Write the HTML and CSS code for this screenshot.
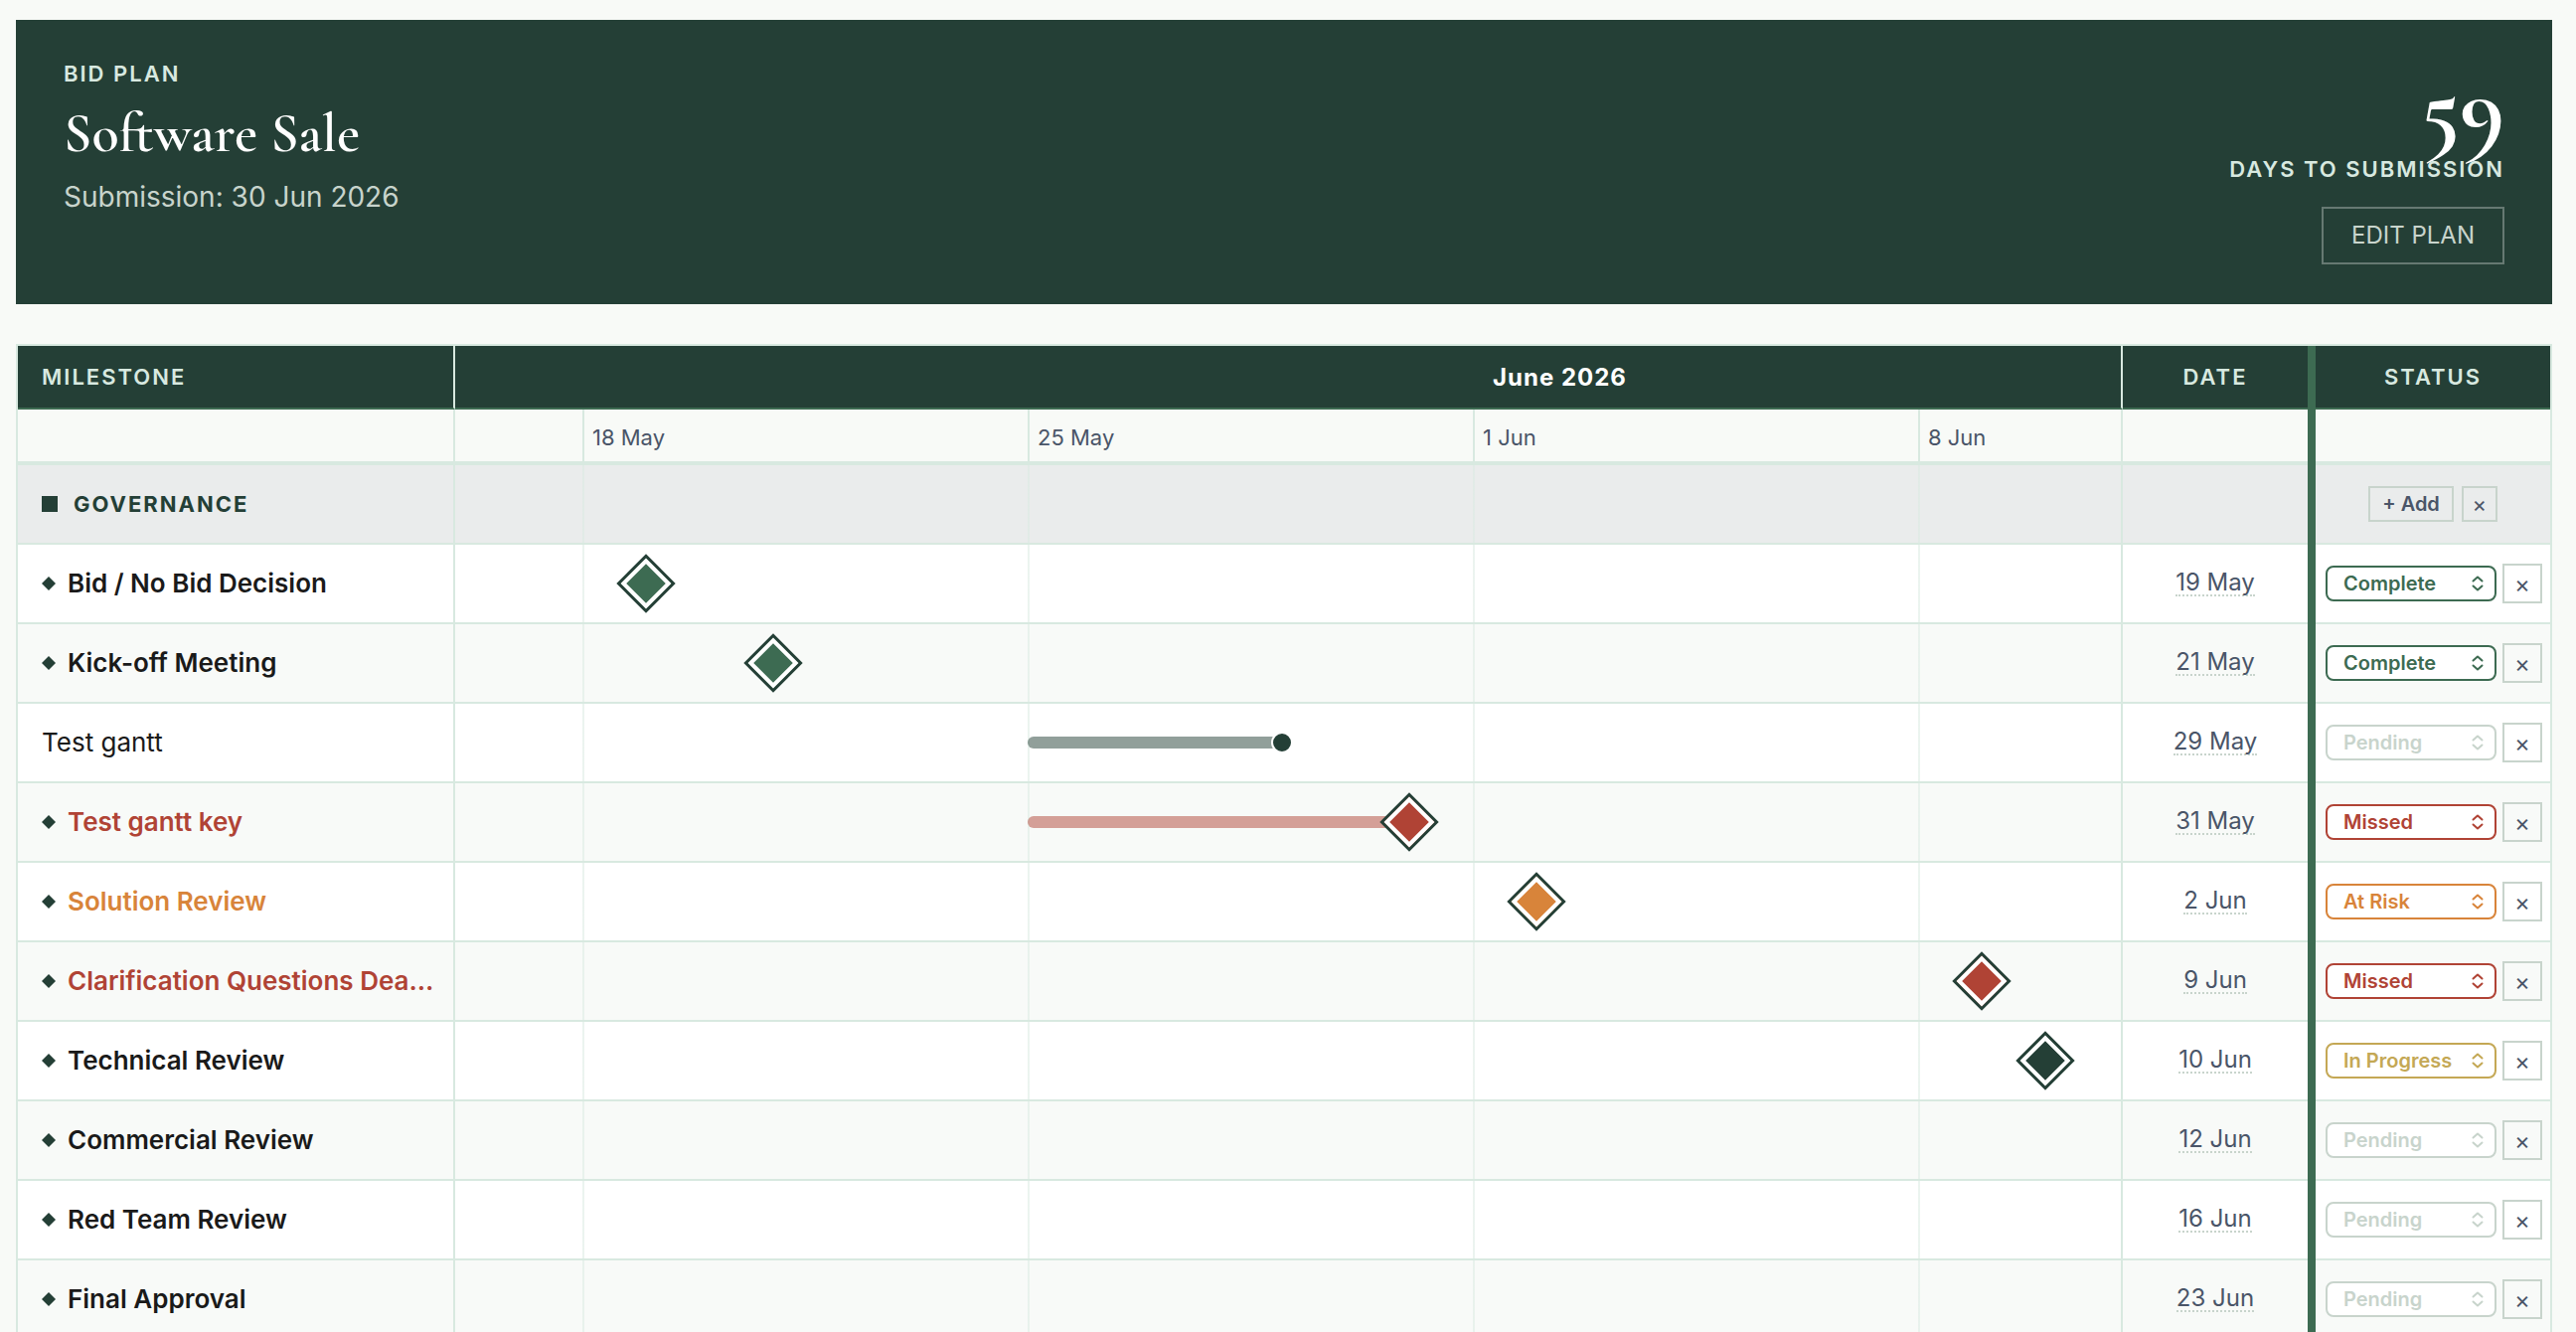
FILE: index.html
```html
<!DOCTYPE html>
<html lang="en">
<head>
    <meta charset="UTF-8">
    <meta name="viewport" content="width=device-width, initial-scale=1.0">
    <title>Bid Plan - Software Sale</title>
    <link rel="stylesheet" href="styles.css">
</head>
<body>
    <!-- shared chevron icon for the status drop-downs -->
    <svg class="sprite" aria-hidden="true">
        <symbol id="updown" viewBox="0 0 12 16">
            <path d="M1.5 5.5 6 1.5l4.5 4M1.5 10.5 6 14.5l4.5-4" fill="none" stroke="currentColor" stroke-width="2" stroke-linecap="round" stroke-linejoin="round"/>
        </symbol>
    </svg>

    <header class="plan-header">
        <div class="plan-info">
            <div class="eyebrow">BID PLAN</div>
            <h1>Software Sale</h1>
            <p>Submission: 30 Jun 2026</p>
        </div>
        <div class="countdown">
            <div class="days">59</div>
            <div class="eyebrow">DAYS TO SUBMISSION</div>
            <button class="edit-btn" type="button">EDIT PLAN</button>
        </div>
    </header>

    <table class="gantt">
        <colgroup>
            <col class="col-name">
            <col>
            <col class="col-date">
            <col class="col-status">
        </colgroup>
        <thead>
            <tr class="head-row">
                <th class="name">MILESTONE</th>
                <th class="timeline"><div class="track"><span class="month" style="--day: 16">June 2026</span></div></th>
                <th class="date">DATE</th>
                <th class="status">STATUS</th>
            </tr>
            <tr class="week-row">
                <td class="name"></td>
                <td class="timeline">
                    <div class="track">
                        <span class="week" style="--day: 2">18 May</span>
                        <span class="week" style="--day: 9">25 May</span>
                        <span class="week" style="--day: 16">1 Jun</span>
                        <span class="week" style="--day: 23">8 Jun</span>
                    </div>
                </td>
                <td class="date"></td>
                <td class="status"></td>
            </tr>
        </thead>
        <tbody id="plan-rows">
            <tr class="section-row">
                <td class="name"><span class="section-name">GOVERNANCE</span></td>
                <td class="timeline"></td>
                <td class="date"></td>
                <td class="status">
                    <div class="section-actions">
                        <button class="add-btn" type="button">+ Add</button>
                        <button class="remove-btn small" type="button" aria-label="Remove section">×</button>
                    </div>
                </td>
            </tr>
        </tbody>
    </table>

    <script src="plan.js"></script>
</body>
</html>
```
FILE: styles.css
```css
:root {
    --dark: #243f36;
    --green: #3d6b52;
    --mint: #d8e9e0;
    --line: #c8d4cc;
    --page: #f8faf7;
    --slate: #4a5568;
    --red: #b04335;
    --orange: #d8843a;
    --gold: #c4a855;
    --day-width: 64px;
}

* {
    box-sizing: border-box;
}

body {
    font-family: Inter, "Liberation Sans", sans-serif;
    margin: 0;
    padding: 20px 24px 0 16px;
    background-color: var(--page);
    color: #1a1a1a;
}

button,
select {
    font-family: inherit;
    cursor: pointer;
}

.sprite {
    display: none;
}

/* Header */
.plan-header {
    display: flex;
    justify-content: space-between;
    background-color: var(--dark);
    color: white;
    padding: 40px 48px;
    margin-bottom: 40px;
}

.eyebrow {
    font-size: 22px;
    font-weight: 600;
    line-height: 28px;
    letter-spacing: 2px;
    color: var(--mint);
}

.plan-info h1 {
    font-family: "Cormorant Garamond", "Liberation Serif", serif;
    font-size: 56px;
    font-weight: 600;
    line-height: 64px;
    margin: 14px 0 16px;
}

.plan-info p {
    font-size: 28px;
    line-height: 32px;
    color: #c8d4cc;
    margin: 0;
}

.countdown {
    display: flex;
    flex-direction: column;
    align-items: flex-end;
}

.days {
    font-family: "Cormorant Garamond", "Liberation Serif", serif;
    font-size: 96px;
    font-weight: 700;
    line-height: 96px;
}

.edit-btn {
    font-size: 24px;
    line-height: 30px;
    padding: 12px 28px;
    margin-top: 24px;
    background: none;
    border: 2px solid rgba(255, 255, 255, 0.3);
    color: #c8d4cc;
}

/* Gantt table */
.gantt {
    width: 100%;
    table-layout: fixed;
    border-collapse: separate;
    border-spacing: 0;
    border: 2px solid var(--mint);
    background-color: white;
}

.col-name {
    width: 440px;
}

.col-date {
    width: 186px;
}

.col-status {
    width: 244px;
}

.gantt th,
.gantt td {
    height: 80px;
    padding: 0;
    border-bottom: 2px solid var(--mint);
}

.gantt .name {
    padding: 0 16px 0 24px;
    border-right: 2px solid var(--mint);
    text-align: left;
}

.gantt .timeline {
    border-right: 2px solid var(--mint);
}

.gantt .date {
    text-align: center;
}

.gantt .status {
    position: relative;
    padding-left: 8px;
}

/* Divider runs over the row borders so it stays unbroken */
.gantt .status::before {
    content: "";
    position: absolute;
    top: -2px;
    bottom: -2px;
    left: 0;
    width: 8px;
    background-color: var(--green);
}

.gantt .head-row .status::before {
    top: 0;
}

.gantt .head-row th {
    height: 64px;
    background-color: var(--dark);
    border-bottom-color: var(--green);
    color: var(--mint);
    font-size: 22px;
    font-weight: 600;
    letter-spacing: 2px;
}

.gantt .week-row td {
    height: 54px;
    background-color: var(--page);
}

.gantt .section-row td {
    height: 82px;
    background-color: #eaecec;
    border-top: 2px solid var(--mint);
}

.task-row:nth-child(odd) {
    background-color: #f8faf8;
}

/* One faint line for each Monday */
tbody .timeline {
    background-image: linear-gradient(to right, rgba(216, 233, 224, 0.5) 2px, transparent 2px);
    background-size: calc(var(--day-width) * 7) 100%;
    background-position: calc(var(--day-width) * 2) 0;
}

.track {
    position: relative;
    height: 100%;
    overflow: hidden;
}

.track > * {
    position: absolute;
    left: calc(var(--day) * var(--day-width));
}

.month {
    padding-left: 20px;
    color: white;
    font-size: 24px;
    font-weight: 700;
    line-height: 64px;
    letter-spacing: 1px;
}

.week {
    padding-left: 8px;
    border-left: 2px solid var(--mint);
    color: var(--slate);
    font-size: 22px;
    line-height: 56px;
}

.section-name {
    display: flex;
    align-items: center;
    gap: 16px;
    color: var(--dark);
    font-size: 22px;
    font-weight: 700;
    letter-spacing: 2px;
}

.section-name::before {
    content: "";
    width: 16px;
    height: 16px;
    background-color: var(--dark);
}

.task-name {
    display: flex;
    align-items: center;
    gap: 12px;
    font-size: 26px;
    line-height: 32px;
}

.task-name svg {
    flex: none;
    width: 14px;
    height: 14px;
    fill: var(--dark);
}

.task-name span {
    overflow: hidden;
    text-overflow: ellipsis;
    white-space: nowrap;
}

.key .task-name {
    font-weight: 600;
}

.missed .task-name {
    color: var(--red);
}

.at-risk .task-name {
    color: var(--orange);
}

/* Bars and markers */
.bar {
    top: 50%;
    width: calc(var(--days) * var(--day-width));
    height: 12px;
    margin-top: -6px;
    border-radius: 6px;
    background-color: var(--marker);
    opacity: 0.5;
}

.dot {
    top: 50%;
    width: 22px;
    height: 22px;
    margin: -11px 0 0 -11px;
    border: 2px solid white;
    border-radius: 50%;
    background-color: var(--marker);
}

.diamond {
    top: 50%;
    width: 36px;
    height: 36px;
    margin: -18px 0 0 -18px;
    border: 4px solid white;
    background-color: var(--marker);
    box-shadow: 0 0 0 3px var(--dark);
    transform: rotate(45deg);
}

.task-row {
    --marker: var(--dark);
    --status: var(--line);
}

.complete {
    --marker: var(--green);
    --status: var(--green);
}

.missed {
    --marker: var(--red);
    --status: var(--red);
}

.at-risk {
    --marker: var(--orange);
    --status: var(--orange);
}

.in-progress {
    --status: var(--gold);
}

.date-btn {
    padding: 0;
    border: 0;
    border-bottom: 2px dotted var(--line);
    background: none;
    color: var(--slate);
    font-size: 24px;
    line-height: 24px;
}

/* Status column */
.status-actions,
.section-actions {
    display: flex;
    align-items: center;
}

.status-actions {
    gap: 6px;
    padding: 0 8px 0 10px;
}

.section-actions {
    justify-content: center;
    gap: 8px;
}

.status-select {
    position: relative;
    flex: 1;
    color: var(--status);
}

.status-select select {
    display: block;
    appearance: none;
    width: 100%;
    height: 36px;
    padding: 0 16px;
    border: 2px solid var(--status);
    border-radius: 8px;
    background-color: white;
    color: var(--status);
    font-size: 20px;
    font-weight: 600;
}

.status-select svg {
    position: absolute;
    top: 10px;
    right: 13px;
    width: 12px;
    height: 16px;
    pointer-events: none;
}

.add-btn,
.remove-btn {
    padding: 0;
    border: 2px solid var(--line);
    background: none;
    color: var(--slate);
    font-size: 20px;
}

.add-btn {
    height: 36px;
    padding: 0 12px;
    font-weight: 600;
}

.remove-btn {
    width: 40px;
    height: 40px;
    font-size: 24px;
}

.remove-btn.small {
    width: 36px;
    height: 36px;
    font-size: 22px;
}
```
FILE: plan.js
```js
// day is counted from the left edge of the timeline (16 May)
const tasks = [
    { name: 'Bid / No Bid Decision', key: true, date: '19 May', day: 3, status: 'Complete' },
    { name: 'Kick-off Meeting', key: true, date: '21 May', day: 5, status: 'Complete' },
    { name: 'Test gantt', key: false, date: '29 May', start: 9, day: 13, status: 'Pending' },
    { name: 'Test gantt key', key: true, date: '31 May', start: 9, day: 15, status: 'Missed' },
    { name: 'Solution Review', key: true, date: '2 Jun', day: 17, status: 'At Risk' },
    { name: 'Clarification Questions Deadline', key: true, date: '9 Jun', day: 24, status: 'Missed' },
    { name: 'Technical Review', key: true, date: '10 Jun', day: 25, status: 'In Progress' },
    { name: 'Commercial Review', key: true, date: '12 Jun', day: 27, status: 'Pending' },
    { name: 'Red Team Review', key: true, date: '16 Jun', day: 31, status: 'Pending' },
    { name: 'Final Approval', key: true, date: '23 Jun', day: 38, status: 'Pending' }
];

const statuses = ['Pending', 'In Progress', 'Complete', 'At Risk', 'Missed'];
const rows = document.getElementById('plan-rows');

function renderTask(task) {
    const row = document.createElement('tr');
    row.className = 'task-row ' + task.status.toLowerCase().replace(' ', '-') + (task.key ? ' key' : '');

    const icon = task.key ? '<svg viewBox="0 0 14 14"><path d="M7 0l7 7-7 7-7-7z"/></svg>' : '';
    const bar = task.start ? `<div class="bar" style="--day: ${task.start}; --days: ${task.day - task.start}"></div>` : '';
    const options = statuses.map(s => `<option${s === task.status ? ' selected' : ''}>${s}</option>`).join('');

    row.innerHTML = `
        <td class="name"><div class="task-name">${icon}<span>${task.name}</span></div></td>
        <td class="timeline"><div class="track">${bar}<div class="${task.key ? 'diamond' : 'dot'}" style="--day: ${task.day}"></div></div></td>
        <td class="date"><button class="date-btn" type="button">${task.date}</button></td>
        <td class="status">
            <div class="status-actions">
                <div class="status-select">
                    <select aria-label="Status of ${task.name}">${options}</select>
                    <svg aria-hidden="true"><use href="#updown"/></svg>
                </div>
                <button class="remove-btn" type="button" aria-label="Remove ${task.name}">×</button>
            </div>
        </td>`;
    rows.appendChild(row);
}

tasks.forEach(renderTask);
```
